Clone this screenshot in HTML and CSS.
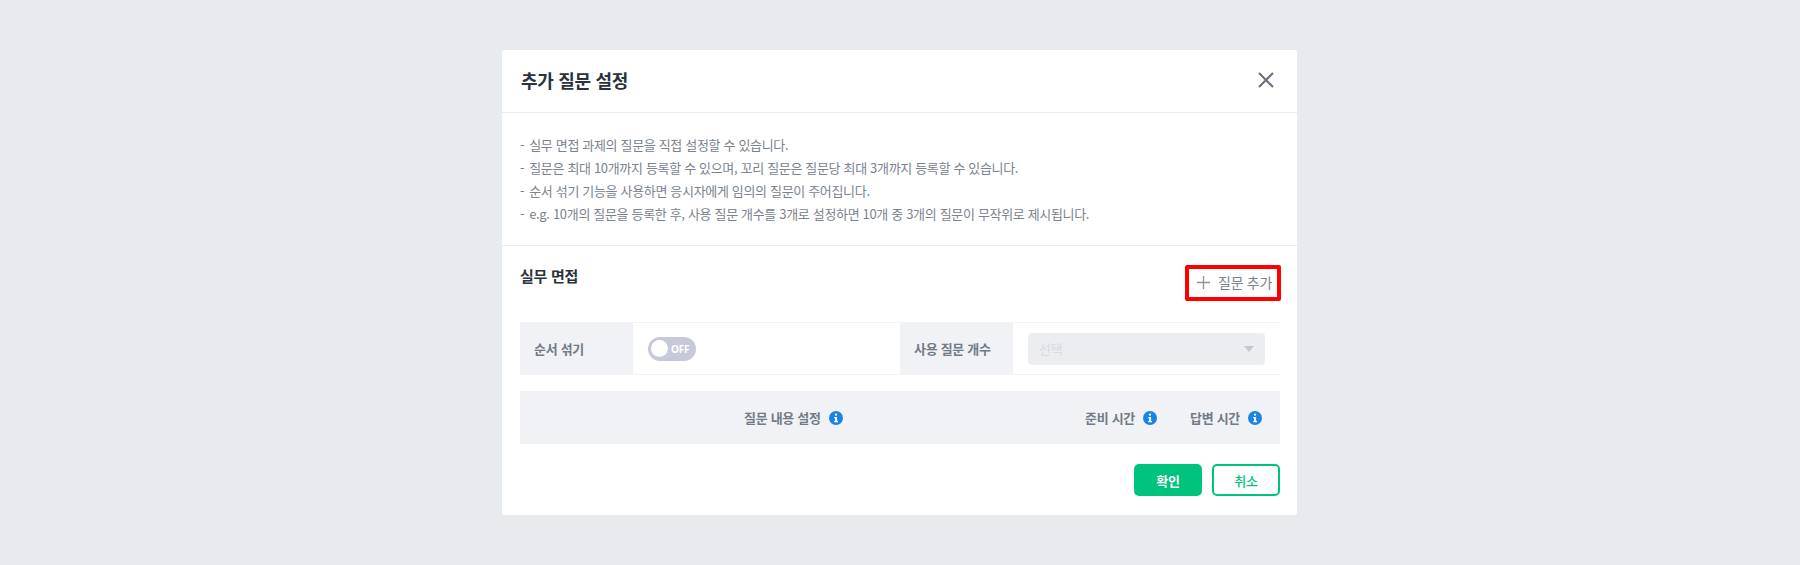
FILE: index.html
```html
<!DOCTYPE html>
<html lang="ko">
<head>
<meta charset="utf-8">
<title>추가 질문 설정</title>
<link rel="stylesheet" href="styles.css">
</head>
<body>
<div class="modal">
  <header class="modal-header">
    <h1>추가 질문 설정</h1>
    <svg class="close" width="18" height="18" viewBox="0 0 18 18"><path d="M2 2L16 16M16 2L2 16" fill="none" stroke="#66707c" stroke-width="2"/></svg>
  </header>
  <ul class="notes">
    <li>실무 면접 과제의 질문을 직접 설정할 수 있습니다.</li>
    <li>질문은 최대 10개까지 등록할 수 있으며, 꼬리 질문은 질문당 최대 3개까지 등록할 수 있습니다.</li>
    <li>순서 섞기 기능을 사용하면 응시자에게 임의의 질문이 주어집니다.</li>
    <li>e.g. 10개의 질문을 등록한 후, 사용 질문 개수를 3개로 설정하면 10개 중 3개의 질문이 무작위로 제시됩니다.</li>
  </ul>
  <section class="body">
    <div class="section-head">
      <h2>실무 면접</h2>
      <button class="add">
        <svg width="13" height="13" viewBox="0 0 13 13"><path d="M6.5 0V13M0 6.5H13" fill="none" stroke="#8b929c" stroke-width="1.3"/></svg>
        <span>질문 추가</span>
      </button>
    </div>
    <div class="settings">
      <div class="label">순서 섞기</div>
      <div class="cell cell-toggle">
        <div class="toggle"><span class="knob"></span><span class="off">OFF</span></div>
      </div>
      <div class="label">사용 질문 개수</div>
      <div class="cell cell-select">
        <div class="select"><span>선택</span><i class="caret"></i></div>
      </div>
    </div>
    <div class="col-head">
      <div class="col col-main">질문 내용 설정
        <svg class="info" viewBox="0 0 14 14"><circle cx="7" cy="7" r="7" fill="#1a83e6"/><rect x="5.9" y="2.6" width="2.2" height="2.2" rx="1.1" fill="#fff"/><path d="M5.2 6H8.1V9.9H9V11.2H5.2V9.9H6V7.3H5.2Z" fill="#fff"/></svg>
      </div>
      <div class="col col-prep">준비 시간
        <svg class="info" viewBox="0 0 14 14"><circle cx="7" cy="7" r="7" fill="#1a83e6"/><rect x="5.9" y="2.6" width="2.2" height="2.2" rx="1.1" fill="#fff"/><path d="M5.2 6H8.1V9.9H9V11.2H5.2V9.9H6V7.3H5.2Z" fill="#fff"/></svg>
      </div>
      <div class="col col-ans">답변 시간
        <svg class="info" viewBox="0 0 14 14"><circle cx="7" cy="7" r="7" fill="#1a83e6"/><rect x="5.9" y="2.6" width="2.2" height="2.2" rx="1.1" fill="#fff"/><path d="M5.2 6H8.1V9.9H9V11.2H5.2V9.9H6V7.3H5.2Z" fill="#fff"/></svg>
      </div>
    </div>
    <div class="actions">
      <button class="btn primary">확인</button>
      <button class="btn outline">취소</button>
    </div>
  </section>
</div>
</body>
</html>
```

FILE: styles.css
```css
* { box-sizing: border-box; }
html, body { margin: 0; height: 565px; overflow: hidden; }
body {
  background: #e7ebee;
  font-family: "Noto Sans CJK KR", "Noto Sans", sans-serif;
  letter-spacing: -0.3px;
  padding: 50px 0 0 502px;
}
.modal {
  width: 795px;
  height: 465px;
  background: #fff;
  border-radius: 2px;
}
.modal-header {
  height: 63px;
  border-bottom: 1px solid #e8eaef;
  padding: 0 22px 2px 19px;
  display: flex;
  align-items: center;
  justify-content: space-between;
}
h1 { margin: 0; font-size: 18px; font-weight: 700; color: #2a323d; }
.notes {
  list-style: none;
  margin: 0;
  height: 133px;
  padding: 20px 18px 0;
  border-bottom: 1px solid #e8eaef;
  font-size: 13px;
  line-height: 23px;
  letter-spacing: -0.33px;
  color: #7a828d;
}
.notes li::before { content: "-"; margin-right: 5px; }
.body { padding: 0 17px 0 18px; }
.section-head {
  height: 76px;
  display: flex;
  justify-content: space-between;
  align-items: flex-start;
}
h2 { margin: 19px 0 0; font-size: 15px; font-weight: 700; color: #2a323d; line-height: 22px; }
.add {
  margin: 19px -1px 0 0;
  width: 96px;
  height: 36px;
  border: 4px solid #f00;
  border-radius: 2px;
  background: #fff;
  display: flex;
  align-items: center;
  justify-content: flex-end;
  gap: 8px;
  padding: 0 5px 2px 0;
  font: 400 14px "Noto Sans CJK KR", sans-serif;
  letter-spacing: -0.3px;
  color: #7a828d;
}
.settings {
  height: 53px;
  display: grid;
  grid-template-columns: 113px 267px 113px 1fr;
  border-top: 1px solid #f1f3f5;
  border-bottom: 1px solid #f1f3f5;
}
.label {
  background: #f0f2f5;
  padding-left: 14px;
  font-size: 13px;
  font-weight: 700;
  color: #727a86;
  display: flex;
  align-items: center;
}
.cell { display: flex; align-items: center; padding-left: 15px; }
.toggle {
  width: 48px;
  height: 24px;
  border-radius: 12px;
  background: #c5c9da;
  display: flex;
  align-items: center;
  padding-left: 3px;
  gap: 3px;
}
.knob { width: 17px; height: 17px; border-radius: 50%; background: #fff; }
.off { font: 700 10px "Noto Sans", sans-serif; letter-spacing: -0.2px; color: #fff; }
.select {
  width: 237px;
  height: 32px;
  border-radius: 4px;
  background: #ebedf1;
  display: flex;
  align-items: center;
  justify-content: space-between;
  padding: 0 11px;
  font-size: 13px;
  color: #d8dbe0;
}
.caret {
  width: 0;
  height: 0;
  border-left: 5px solid transparent;
  border-right: 5px solid transparent;
  border-top: 6px solid #c3c7cf;
}
.col-head {
  margin-top: 16px;
  height: 53px;
  background: #f0f2f5;
  display: flex;
  align-items: center;
  font-size: 13px;
  font-weight: 700;
  color: #727a86;
}
.col { display: flex; align-items: center; gap: 8px; white-space: nowrap; }
.col-main { margin-left: 224px; width: 341px; }
.col-prep { width: 105px; }
.info { width: 14px; height: 14px; }
.actions {
  margin-top: 20px;
  display: flex;
  justify-content: flex-end;
  gap: 10px;
}
.btn {
  width: 68px;
  height: 32px;
  border-radius: 5px;
  padding: 0;
  font: 700 13px "Noto Sans CJK KR", sans-serif;
  letter-spacing: -0.3px;
}
.primary { background: #00c37c; border: 0; color: #fff; }
.outline { background: #fff; border: 2px solid #00c37c; color: #00c37c; font-weight: 500; }
```
